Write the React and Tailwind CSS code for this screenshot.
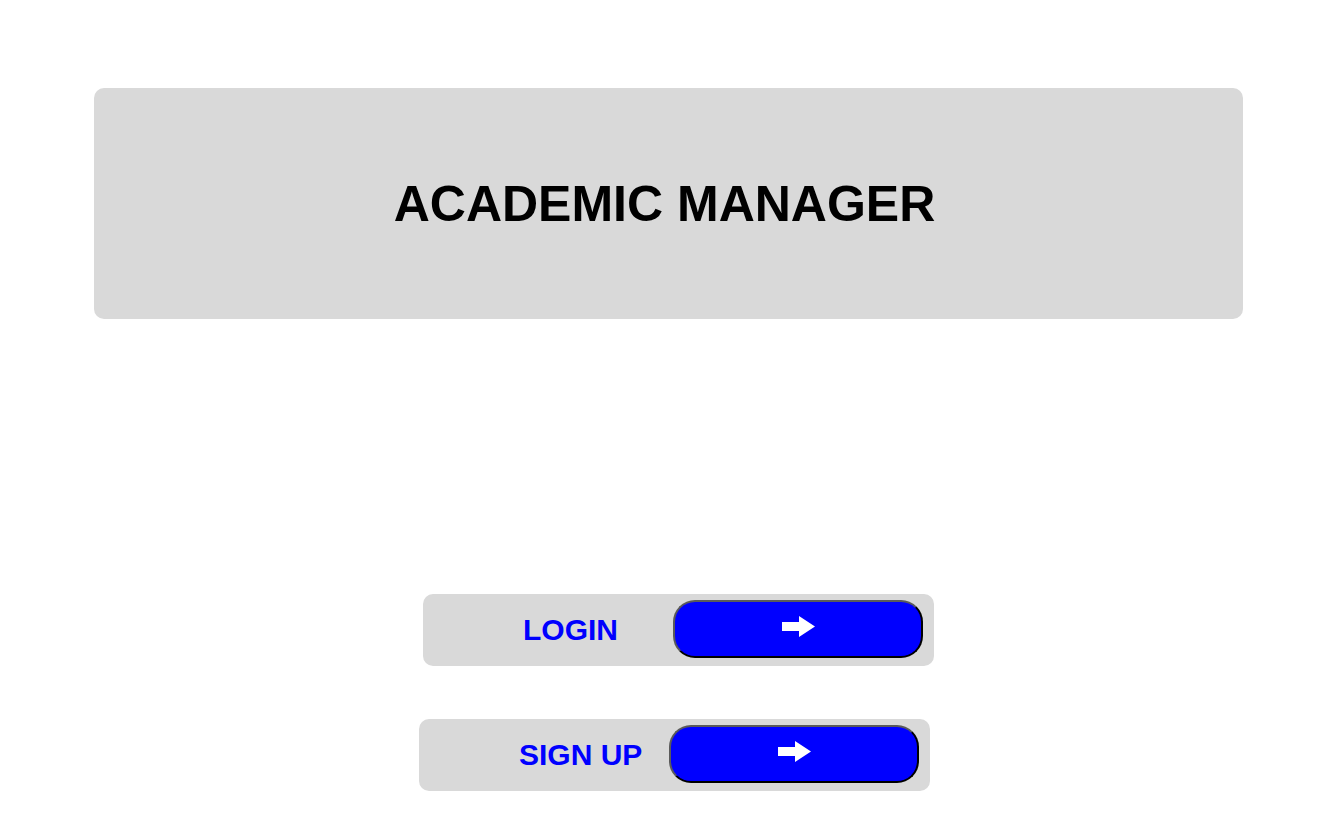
import React from "react";

function Arrow() {
    return (
        <svg width="33" height="21" viewBox="0 0 33 21" className="mb-[5px]">
            <path d="M0 6 H17 V0 L33 10.5 L17 21 V15 H0 Z" fill="#ffffff" />
        </svg>
    );
}

function ActionRow({ label, shift }) {
    return (
        <div className={`w-full flex justify-center ${shift}`}>
            <div className="w-[511px] h-[72px] bg-[#d9d9d9] rounded-[10px] flex items-start">
                <div className="w-[250px] h-full flex items-center pl-[100px]">
                    <span className="text-[30px] font-bold text-[#0000ff] leading-none">{label}</span>
                </div>
                <button className="mt-[6px] w-[250px] h-[58px] bg-[#0000ff] rounded-[22px] border-2 border-t-[#5a5a5a] border-l-[#5a5a5a] border-r-black border-b-black flex items-center justify-center">
                    <Arrow />
                </button>
            </div>
        </div>
    );
}

export default function App() {
    return (
        <div className="w-full min-h-[822px] bg-white pt-[88px]" style={{ fontFamily: '"Liberation Sans", Arial, sans-serif' }}>
            <div className="ml-[94px] mr-[95px] h-[231px] bg-[#d9d9d9] rounded-[10px] flex items-center justify-center pr-[8px]">
                <h1 className="text-[50px] font-bold text-black leading-none">ACADEMIC MANAGER</h1>
            </div>
            <div className="flex flex-col gap-[53px] mt-[275px]">
                <ActionRow label="LOGIN" shift="pl-[19px]" />
                <ActionRow label="SIGN UP" shift="pl-[11px]" />
            </div>
        </div>
    );
}
